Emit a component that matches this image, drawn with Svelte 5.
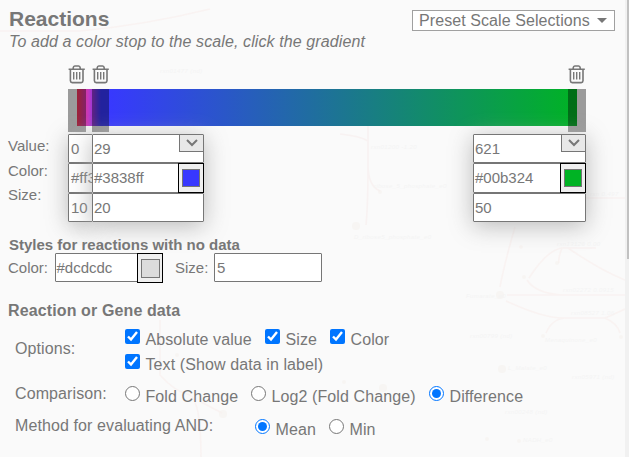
<script>
  const stops = [
    { x: 68, left: 68, handle: 68, width: 25, grip: 18, value: '0', color: '#ff3838', size: '10', covered: true },
    { x: 92, left: 92, handle: 92, width: 112, grip: 17, value: '29', color: '#3838ff', size: '20' },
    { x: 568, left: 473, handle: 568, width: 113, grip: 18, value: '621', color: '#00b324', size: '50' }
  ];

  const mapLabels = [
    [371, 149, 'rxn01200 -1.20'], [374, 188, 'ribose_5_phosphate_e0'], [354, 239, 'D_ribose5_phosphate_e0'],
    [557, 246, 'rxn13126 0.00'], [590, 196, 'rxn 0.497'], [563, 292, 'rxn02272 0.0915'],
    [571, 315, 'rxn08527 1.06'], [470, 338, 'rxn00799 (nd)'], [466, 298, 'Fumarate_e0'],
    [508, 370, 'L_Malate_e0'], [572, 379, 'rxn05971 (nd)'], [505, 414, 'rxn00248 (nd)'],
    [523, 442, 'NADH_e0'], [545, 342, 'Menaquinone_e0'], [160, 73, 'rxn01477 (nd)']
  ];
</script>

{#snippet trash()}
  <svg class="trash" width="18" height="19" viewBox="0 0 18 19" fill="none" stroke="#777" stroke-width="1.6">
    <path d="M.6 4.2H16.8M5.2 4V2.8Q5.4 1.1 6.8 1H10.6Q12 1.1 12.2 2.8V4M2.4 4.5V15.8Q2.5 17.6 4.2 17.6H13.2Q14.9 17.6 15 15.8V4.5" />
    <path d="M5.7 7V14.5M8.7 7V14.5M11.7 7V14.5" stroke-width="1.4" />
  </svg>
{/snippet}

<div class="page">
  <svg class="map" width="625" height="457" fill="none">
    <g stroke="#f8eeed" stroke-width="1.6" opacity=".6">
      <path d="M0 31H80Q145 25 210 9" />
      <path d="M368 125V165Q368 205 366 225M340 134Q360 136 368 141M368 165Q368 186 380 191" />
      <path d="M586 198H625M515 227Q504 265 500 287M507 295H625M506 301Q545 319 565 318H605Q621 311 625 309M529 278Q547 250 562 248Q558 258 559 263M562 248H596M568 248Q600 270 625 280M527 280Q535 293 562 295M546 333Q552 319 565 318M605 318Q617 323 620 333" />
      <path d="M160 320V375Q175 392 190 395Q201 402 201 457M201 402L222 413" />
    </g>
    <g fill="#f6f2ef" opacity=".6">
      <circle cx="500" cy="295" r="4" /><circle cx="356" cy="226" r="4" /><circle cx="502" cy="369" r="4" />
      <circle cx="223" cy="414" r="4" /><circle cx="383" cy="388" r="4" /><circle cx="177" cy="355" r="2" />
      <circle cx="524" cy="277" r="2" /><circle cx="521" cy="247" r="2" /><circle cx="557" cy="263" r="2" />
      <circle cx="543" cy="336" r="2" /><circle cx="621" cy="337" r="2" /><circle cx="487" cy="439" r="2" />
      <circle cx="519" cy="441" r="2" /><circle cx="344" cy="382" r="2" /><circle cx="380" cy="192" r="2" />
    </g>
    {#each mapLabels as [x, y, text]}
      <text {x} {y}>{text}</text>
    {/each}
  </svg>

  <main>
    <header>
      <div>
        <h2>Reactions</h2>
        <p class="hint">To add a color stop to the scale, click the gradient</p>
      </div>
      <button class="preset"><span>Preset Scale Selections</span><i class="caret"></i></button>
    </header>

    <section class="scale">
      <div class="gradient"></div>
      <div class="labels"><span>Value:</span><span>Color:</span><span>Size:</span></div>
      {#each stops as s}
        <div class="bin" style="left:{s.x}px">{@render trash()}</div>
        <div class="handle" style="left:{s.handle}px;width:{s.grip}px"></div>
        <div class="stop" class:covered={s.covered} style="left:{s.left}px;width:{s.width}px">
          <div class="field">
            <span>{s.value}</span>
            {#if !s.covered}
              <div class="drop"><svg width="12" height="8" viewBox="0 0 12 8"><path d="M1 1L6 6L11 1" fill="none" stroke="#777" stroke-width="2" /></svg></div>
            {/if}
          </div>
          <div class="field color">
            <span>{s.color}</span>
            {#if !s.covered}
              <div class="swatch"><i style="background:{s.color}"></i></div>
            {/if}
          </div>
          <div class="field"><span>{s.size}</span></div>
        </div>
      {/each}
    </section>

    <h4>Styles for reactions with no data</h4>
    <div class="nodata">
      <span class="lab">Color:</span>
      <div class="field color"><span>#dcdcdc</span><div class="swatch"><i style="background:#dcdcdc"></i></div></div>
      <span class="lab size">Size:</span>
      <div class="field plain"><span>5</span></div>
    </div>

    <h3>Reaction or Gene data</h3>
    <div class="row options">
      <span class="name">Options:</span>
      <div class="choices">
        <div class="line">
          <label style="width:140px"><input type="checkbox" checked /><span>Absolute value</span></label>
          <label style="width:65px"><input type="checkbox" checked /><span>Size</span></label>
          <label><input type="checkbox" checked /><span>Color</span></label>
        </div>
        <div class="line"><label><input type="checkbox" checked /><span>Text (Show data in label)</span></label></div>
      </div>
    </div>
    <div class="row comparison">
      <span class="name">Comparison:</span>
      <div class="line">
        <label style="width:126px"><input type="radio" name="cmp" /><span>Fold Change</span></label>
        <label style="width:178px"><input type="radio" name="cmp" /><span>Log2 (Fold Change)</span></label>
        <label><input type="radio" name="cmp" checked /><span>Difference</span></label>
      </div>
    </div>
    <div class="row method">
      <span class="name wide">Method for evaluating AND:</span>
      <div class="line">
        <label style="width:74px"><input type="radio" name="and" checked /><span>Mean</span></label>
        <label><input type="radio" name="and" /><span>Min</span></label>
      </div>
    </div>
  </main>
  <div class="track"><div class="thumb"></div></div>
</div>

<style>
  :global(body) { margin: 0; overflow: hidden; }
  .page {
    position: relative;
    display: flex;
    width: 629px;
    height: 457px;
    overflow: hidden;
    background: #fafafa;
    color: #777;
    font: 16px/20px "Liberation Sans", Arial, sans-serif;
    white-space: nowrap;
  }
  .map { position: absolute; left: 0; top: 0; }
  .map text { fill: #f4f4f4; font: italic 6px "Liberation Sans", Arial, sans-serif; letter-spacing: .4px; }
  main { position: relative; width: 625px; flex: none; }
  .track { width: 4px; background: #f1f1f1; padding-left: 2px; box-sizing: border-box; position: relative; }
  .thumb { height: 259px; background: #c1c1c1; }
  h2, h3, h4, p { margin: 0; }
  header { display: flex; justify-content: space-between; height: 64px; padding: 8px 10px 0 9px; box-sizing: border-box; }
  h2 { font-size: 21px; line-height: 22px; }
  .hint { font-style: italic; line-height: 23px; letter-spacing: .1px; }
  .preset {
    display: flex;
    align-items: center;
    justify-content: space-between;
    width: 203px;
    height: 21px;
    margin-top: 2px;
    padding: 0 7px 0 6px;
    box-sizing: border-box;
    border: 1px solid #a0a0a0;
    background: #fff;
    color: #777;
    font: 16px/19px "Liberation Sans", Arial, sans-serif;
    letter-spacing: .08px;
  }
  .caret { border: 5px solid transparent; border-top-color: #777; border-bottom: 0; }
  .scale { position: relative; height: 170px; }
  .gradient {
    position: absolute;
    left: 77px;
    top: 25px;
    width: 500px;
    height: 37px;
    background: linear-gradient(to right, #ff3858 0, #c038c4 12px, #3838ff 24px, #3838ff 30px, #00b324 100%);
  }
  .labels { position: absolute; left: 8px; top: 70px; display: flex; flex-direction: column; font-size: 15px; line-height: 24.5px; }
  .bin { position: absolute; top: 1px; height: 19px; }
  .trash { display: block; }
  .handle { position: absolute; top: 25px; height: 43px; background: rgba(0, 0, 0, .38); }
  .stop { position: absolute; top: 70px; display: flex; flex-direction: column; box-shadow: 0 4px 22px rgba(170, 170, 170, .8); background: #fafafa; }
  .field {
    display: flex;
    justify-content: space-between;
    height: 29px;
    box-sizing: border-box;
    border: 1px solid #767676;
    border-radius: 1px;
    background: #fff;
    padding-left: 1px;
    font-size: 15px;
    line-height: 27px;
  }
  .stop .color { height: 30px; }
  .covered .field { padding-left: 2px; }
  .drop { display: flex; align-items: center; justify-content: center; width: 23px; height: 16px; border: 1px solid #767676; border-width: 0 0 1px 1px; background: #e8e8e8; }
  .swatch { display: flex; flex: none; align-items: center; justify-content: center; width: 26px; height: 30px; margin: -1px -1px -1px 0; box-sizing: border-box; border: 1px solid #000; background: #efefef; }
  .swatch i { width: 18px; height: 18px; border: 1px solid #767676; box-sizing: border-box; }
  .nodata .swatch i { width: 19px; height: 19px; }
  h4 { padding: 2px 0 0 9px; font-size: 15px; line-height: 17px; }
  .nodata { display: flex; height: 37px; padding-left: 8px; font-size: 15px; line-height: 30px; }
  .lab { width: 46.5px; }
  .nodata .color { width: 108.5px; }
  .size { margin-left: 12px; width: 39px; }
  .plain { width: 108px; padding-left: 2px; }
  h3 { padding: 11px 0 0 8px; font-size: 16px; line-height: 20px; letter-spacing: .12px; }
  .row { display: flex; padding-left: 15px; letter-spacing: .1px; }
  .name { width: 110px; }
  .wide { width: 240px; }
  .line { display: flex; height: 25px; }
  label { display: flex; line-height: 20px; }
  label span { padding-top: 1px; }
  input { width: 15px; height: 15px; margin: 0 5.5px 0 0; flex: none; }
  .options { padding-top: 8px; height: 50px; }
  .options .name { padding-top: 10px; }
  .comparison { padding-top: 7px; height: 26px; }
  .method { padding-top: 7px; }
  .comparison .name { margin-top: -2px; }
  .method .name { margin-top: -3px; }
</style>
